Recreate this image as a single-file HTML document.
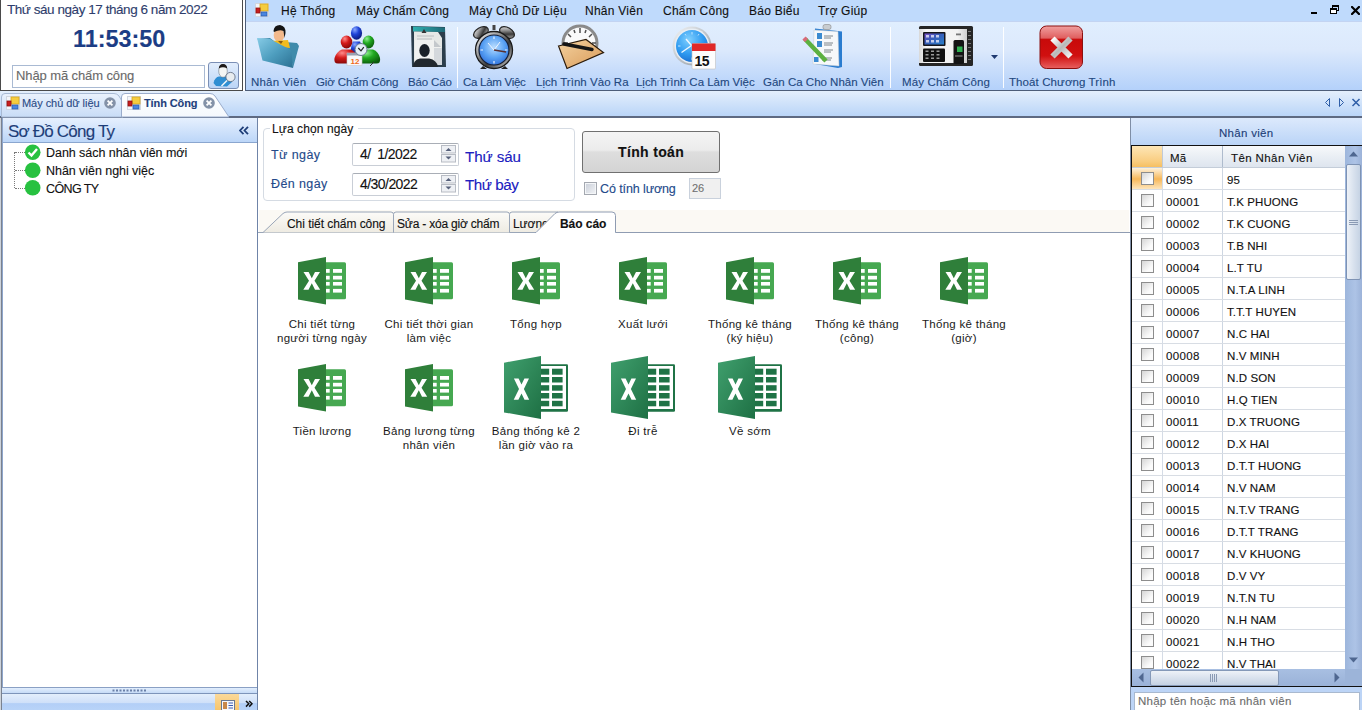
<!DOCTYPE html>
<html><head><meta charset="utf-8">
<style>
*{margin:0;padding:0;box-sizing:border-box}
html,body{width:1362px;height:710px;overflow:hidden;background:#fff;font-family:"Liberation Sans",sans-serif;position:relative}
.a{position:absolute}
.t{position:absolute;white-space:nowrap;line-height:1;-webkit-text-stroke:0.12px currentColor}
</style></head><body>

<!-- ===== Clock panel ===== -->
<div class="a" style="left:0;top:0;width:243px;height:91px;background:#fff;border-left:1px solid #4a4a4a;border-right:1px solid #4a4a4a;border-bottom:1px solid #4a4a4a"></div>
<div class="t" style="left:7px;top:3px;font-size:13.5px;color:#2e3d6c;letter-spacing:-0.45px">Thứ sáu ngày 17 tháng 6 năm 2022</div>
<div class="t" style="left:73px;top:28px;font-size:23.4px;font-weight:bold;color:#1c3d85">11:53:50</div>
<div class="a" style="left:12px;top:65px;width:193px;height:23px;border:1px solid #a9bad3;background:#fff"></div>
<div class="t" style="left:16px;top:69px;font-size:13px;color:#6a6a6a;letter-spacing:-0.1px">Nhập mã chấm công</div>
<div class="a" style="left:208px;top:62px;width:31px;height:27px;border:1px solid #7b8fb5;border-radius:3px;background:linear-gradient(#e2edfc,#bcd5f6)"></div>
<svg class="a" style="left:205px;top:58px" width="38" height="34" viewBox="0 0 38 34">
<path d="M8.5 25Q10 19 14 18.5L22 18.5Q26 19 27 24L22 28.5L11 28Z" fill="#2f8ed2"/>
<ellipse cx="18" cy="13" rx="4.3" ry="6.3" fill="#f4f6f4" stroke="#5a6470" stroke-width="0.5"/>
<path d="M13.8 10.5Q14 6 18 6Q22 6 22.2 10.5Q18 8 13.8 10.5Z" fill="#1e1a18"/>
<circle cx="25.5" cy="19" r="4.6" fill="#e8ecef" stroke="#5a6678" stroke-width="0.8"/>
<path d="M22 22.5L16.5 28" stroke="#f0f4f8" stroke-width="1.6"/>
</svg>

<!-- ===== Ribbon ===== -->
<div class="a" style="left:245px;top:0;width:1117px;height:91px;border-left:1px solid #4d5d78;border-bottom:1px solid #4d5d78;background:linear-gradient(#bfdafc 0,#bfdafc 21px,#c3d4f2 21px,#c3d4f2 22px,#e0eefe 22px,#dce9fc 55%,#b4d1fa 100%)"></div>


<!-- menu -->
<svg class="a" style="left:255px;top:3px" width="14" height="14" viewBox="0 0 14 14">
<rect x="0.5" y="0.5" width="13" height="13" fill="#f4f6fa" stroke="#d0d6e0"/>
<rect x="5" y="1" width="8" height="7" fill="#f5cc40" stroke="#d8a820" stroke-width="0.8"/>
<rect x="1" y="5" width="4" height="5" fill="#c81e1e" stroke="#901010" stroke-width="0.8"/>
<rect x="6" y="9" width="6" height="4" fill="#4a86e0" stroke="#2a5cb0" stroke-width="0.8"/>
</svg>
<div class="t" style="left:281px;top:5px;font-size:12px;color:#111;letter-spacing:0.25px">Hệ Thống</div>
<div class="t" style="left:356px;top:5px;font-size:12px;color:#111;letter-spacing:0.25px">Máy Chấm Công</div>
<div class="t" style="left:469px;top:5px;font-size:12px;color:#111;letter-spacing:0.25px">Máy Chủ Dữ Liệu</div>
<div class="t" style="left:585px;top:5px;font-size:12px;color:#111;letter-spacing:0.25px">Nhân Viên</div>
<div class="t" style="left:663px;top:5px;font-size:12px;color:#111;letter-spacing:0.25px">Chấm Công</div>
<div class="t" style="left:749px;top:5px;font-size:12px;color:#111;letter-spacing:0.25px">Báo Biểu</div>
<div class="t" style="left:818px;top:5px;font-size:12px;color:#111;letter-spacing:0.25px">Trợ Giúp</div>
<!-- window controls -->
<div class="a" style="left:1311px;top:12px;width:6px;height:2px;background:#000"></div>
<div class="a" style="left:1332px;top:5px;width:7px;height:6px;border:1px solid #000;border-top-width:2px"></div>
<div class="a" style="left:1330px;top:8px;width:7px;height:6px;border:1px solid #000;border-top-width:2px;background:#fff"></div>
<svg class="a" style="left:1351px;top:6px" width="9" height="9" viewBox="0 0 9 9"><path d="M1 1L8 8M8 1L1 8" stroke="#000" stroke-width="2.2" stroke-linecap="square"/></svg>

<!-- ribbon icons -->
<svg class="a" style="left:252px;top:22px" width="52" height="50" viewBox="0 0 52 50">
<defs><linearGradient id="fold" x1="0" y1="0" x2="1" y2="1"><stop offset="0" stop-color="#86cbe6"/><stop offset="0.5" stop-color="#4e9ebf"/><stop offset="1" stop-color="#2b7092"/></linearGradient></defs>
<path d="M5 17L18 16L22 19L45 21L47 24L41 46L38 29Z" fill="#3f8bab"/>
<ellipse cx="27" cy="13" rx="5.3" ry="6.8" fill="#f2b98c"/>
<path d="M21.5 9Q22 3 28 3Q34 4 33.5 11L32.5 16L31.5 9Q28 7 22 10Z" fill="#141414"/>
<path d="M18 19L36 18L38 26L20 24Z" fill="#f1bb1c"/>
<path d="M26 19L29 22L31 19Z" fill="#8a5a10"/>
<path d="M5 16L18 17L37 27L39.5 29L41 46L10.5 38.5Z" fill="url(#fold)"/>
</svg>
<svg class="a" style="left:330px;top:22px" width="54" height="50" viewBox="0 0 54 50">
<defs>
<radialGradient id="rp" cx="0.35" cy="0.25" r="0.8"><stop offset="0" stop-color="#ff8a8a"/><stop offset="0.45" stop-color="#d41a1a"/><stop offset="1" stop-color="#800606"/></radialGradient>
<radialGradient id="bp" cx="0.35" cy="0.25" r="0.8"><stop offset="0" stop-color="#8aa8ff"/><stop offset="0.45" stop-color="#1f44d8"/><stop offset="1" stop-color="#0a1878"/></radialGradient>
<radialGradient id="gp" cx="0.35" cy="0.25" r="0.8"><stop offset="0" stop-color="#90f090"/><stop offset="0.45" stop-color="#20a820"/><stop offset="1" stop-color="#0a5a0a"/></radialGradient>
</defs>
<path d="M20.5 31Q21 23 23 19.5L30 19.5Q32 23 32.5 31Z" fill="url(#bp)"/>
<ellipse cx="26.5" cy="11" rx="5.6" ry="6.8" fill="url(#bp)"/>
<path d="M8 41.5Q3.5 41.5 4.5 36Q6.5 29.5 12 27.5L21 27.5Q25.5 29.5 26.5 35L26.5 41.5Z" fill="url(#rp)"/>
<ellipse cx="16.5" cy="20" rx="5.8" ry="6.5" fill="url(#rp)"/>
<path d="M28.5 41.5L28.5 35Q29.5 29.5 34 27.5L43 27.5Q48.5 29.5 50 36Q51 41.5 46.5 41.5Z" fill="url(#gp)"/>
<ellipse cx="38.5" cy="20" rx="5.8" ry="6.5" fill="url(#gp)"/>
<rect x="17" y="31" width="15" height="12.5" fill="#f8f8fa" stroke="#c8c8d0" stroke-width="0.6"/>
<rect x="17" y="31" width="15" height="2.5" fill="#9aa0b0"/>
<text x="20.5" y="41.5" font-family="Liberation Sans" font-size="8" font-weight="bold" fill="#f06a1a">12</text>
<circle cx="31" cy="27.5" r="6" fill="#e4eef8" stroke="#6a7c90" stroke-width="1"/>
<path d="M28.3 26L31 28.8L33.8 25.2" stroke="#222" stroke-width="1.2" fill="none"/>
<path d="M40 44L44 40" stroke="#333" stroke-width="1"/>
</svg>
<svg class="a" style="left:404px;top:22px" width="50" height="50" viewBox="0 0 50 50">
<defs><linearGradient id="bt" x1="0" y1="0" x2="1" y2="0"><stop offset="0" stop-color="#2fb0b0"/><stop offset="1" stop-color="#1f6a78"/></linearGradient></defs>
<path d="M7 4L41 5L42 45L8 45Z" fill="#2c3e4c"/>
<path d="M9 4.5L41 5.5L41 10L9 9.5Z" fill="url(#bt)"/>
<path d="M10 9.5L34 10L38 16L38 42L10 42Z" fill="#e6e8e6"/>
<path d="M13 14H30M13 17H28" stroke="#b0b4b8" stroke-width="0.8"/>
<path d="M11 18L30 18L37 25L37 42L11 42Z" fill="#f0f1f0"/>
<path d="M30 18L30 25L37 25Z" fill="#c4c8cc"/>
<path d="M30 26L38 26L38 43L30 43Z" fill="#d4d8dc"/>
<path d="M17.5 11L20 7L22.5 11Z" fill="#333"/>
<ellipse cx="20.5" cy="28.5" rx="5.2" ry="6.5" fill="#1a2028"/>
<path d="M9 45Q9 38 16 36.5L25 36.5Q33 38 34 45Z" fill="#22282e"/>
</svg>
<svg class="a" style="left:468px;top:22px" width="52" height="50" viewBox="0 0 52 50">
<defs>
<radialGradient id="cf" cx="0.5" cy="0.4" r="0.65"><stop offset="0" stop-color="#b8dcff"/><stop offset="0.55" stop-color="#5aa2f4"/><stop offset="1" stop-color="#2a6ad8"/></radialGradient>
<linearGradient id="sil" x1="0" y1="0" x2="1" y2="1"><stop offset="0" stop-color="#ffffff"/><stop offset="0.35" stop-color="#9a9a9a"/><stop offset="0.6" stop-color="#3a3a3a"/><stop offset="1" stop-color="#e0e0e0"/></linearGradient>
</defs>
<ellipse cx="13" cy="10.5" rx="8" ry="5" transform="rotate(-30 13 10.5)" fill="url(#sil)" stroke="#222" stroke-width="1.2"/>
<ellipse cx="39" cy="10.5" rx="8" ry="5" transform="rotate(30 39 10.5)" fill="url(#sil)" stroke="#222" stroke-width="1.2"/>
<rect x="24.5" y="3" width="3" height="5" fill="#444"/>
<path d="M15 44L12 47L19 47ZM37 44L40 47L33 47Z" fill="#222"/>
<circle cx="26" cy="28" r="18.5" fill="url(#sil)" stroke="#1a1a1a" stroke-width="1.3"/>
<circle cx="26" cy="28" r="15" fill="url(#cf)" stroke="#15203a" stroke-width="1.2"/>
<path d="M26 28L20 21M26 28L32 20" stroke="#f0f6ff" stroke-width="1"/>
<path d="M26 28L38 30" stroke="#5a3030" stroke-width="1.3"/>
<g stroke="#e8f2ff" stroke-width="1.2"><path d="M26 14.5V17M26 39V41.5M12.5 28H15M37 28H39.5"/></g>
</svg>
<svg class="a" style="left:554px;top:22px" width="54" height="50" viewBox="0 0 54 50">
<defs><linearGradient id="pad" x1="0" y1="0" x2="1" y2="1"><stop offset="0" stop-color="#f4d2a0"/><stop offset="1" stop-color="#d89a58"/></linearGradient></defs>
<circle cx="26" cy="21" r="17" fill="#fafafa" stroke="#8a8a8a" stroke-width="3"/>
<path d="M26 6V11M14 12L17 15M38 12L35 15M10 21H14M38 21H42M20 8L21 11M32 8L31 11" stroke="#505050" stroke-width="1.5"/>
<path d="M4.5 24L32 17.5L49.5 30.5L13 46.5Z" fill="url(#pad)" stroke="#2a1a0a" stroke-width="1.2"/>
<path d="M10 22L38 27.5" stroke="#151515" stroke-width="3.5" stroke-linecap="round"/>
</svg>
<svg class="a" style="left:668px;top:22px" width="54" height="50" viewBox="0 0 54 50">
<defs><radialGradient id="cf2" cx="0.4" cy="0.3" r="0.75"><stop offset="0" stop-color="#7fd0ff"/><stop offset="0.6" stop-color="#2e9af0"/><stop offset="1" stop-color="#1a6cd0"/></radialGradient>
<linearGradient id="rg2" x1="0" y1="0" x2="1" y2="1"><stop offset="0" stop-color="#f4f6f8"/><stop offset="1" stop-color="#8a949e"/></linearGradient></defs>
<circle cx="24" cy="24" r="19.5" fill="url(#rg2)"/>
<circle cx="24" cy="24" r="17.5" fill="#e8eef4"/>
<circle cx="24" cy="24" r="16" fill="url(#cf2)"/>
<g stroke="#bfe4ff" stroke-width="1"><path d="M24 10V12.5M24 35.5V38M10 24H12.5M35.5 24H38M31 12L30 13.5M17 12L18 13.5"/></g>
<path d="M23.5 23.5L18 17M23.5 23.5L13.5 30.5" stroke="#f0f8ff" stroke-width="1.4"/>
<rect x="24" y="21.5" width="23.5" height="25.5" rx="1" fill="#fdfdfd" stroke="#c0c0c0" stroke-width="0.6"/>
<rect x="24" y="21.5" width="23.5" height="7.5" fill="#e02828"/>
<text x="26.5" y="43.5" font-family="Liberation Sans" font-size="14" font-weight="bold" fill="#111" letter-spacing="-0.5">15</text>
</svg>
<svg class="a" style="left:798px;top:22px" width="50" height="50" viewBox="0 0 50 50">
<path d="M17 6.5L44 9.5L44 45L40 46L17 42Z" fill="#2a7ccf"/>
<path d="M16 8L40 9.5L41 44L15 42Z" fill="#f6f8fa" stroke="#c0c8d0" stroke-width="0.5"/>
<rect x="25" y="2.5" width="8" height="5" rx="2" fill="#c8ccd0" stroke="#888" stroke-width="0.6"/>
<rect x="19" y="11" width="5" height="6" fill="#3a8ad0"/>
<rect x="19" y="19" width="5" height="6" fill="#3a8ad0"/>
<rect x="16" y="35" width="4.5" height="5" fill="#3a8ad0"/>
<path d="M26 14H35M26 16H33M26 21H35M26 23H34M26 28H35M26 30H33M24 36H34M24 38H33" stroke="#707880" stroke-width="0.9"/>
<path d="M7 17L28 39" stroke="#5cb040" stroke-width="4.5"/>
<path d="M6 16L8.5 18.5" stroke="#d86a7a" stroke-width="4.5"/>
</svg>
<svg class="a" style="left:914px;top:22px" width="64" height="50" viewBox="0 0 64 50">
<defs><linearGradient id="mb" x1="0" y1="0" x2="1" y2="0"><stop offset="0" stop-color="#d8d8d8"/><stop offset="0.15" stop-color="#f6f6f6"/><stop offset="0.8" stop-color="#f2f2f2"/><stop offset="1" stop-color="#cfcfcf"/></linearGradient>
<linearGradient id="ms" x1="0" y1="0" x2="1" y2="1"><stop offset="0" stop-color="#7a50c8"/><stop offset="0.4" stop-color="#3a5ab8"/><stop offset="1" stop-color="#2a80c8"/></linearGradient></defs>
<rect x="5" y="4" width="54" height="40" rx="1.5" fill="#262626"/>
<rect x="5" y="7" width="48" height="34" fill="url(#mb)"/>
<rect x="9" y="10" width="22.5" height="14" rx="1" fill="#15151c"/>
<rect x="10.5" y="11.5" width="19.5" height="11" fill="url(#ms)"/>
<g fill="#e8e8f8" opacity="0.8"><rect x="12" y="13" width="3" height="2.5"/><rect x="17" y="13" width="3" height="2.5"/><rect x="22" y="13" width="3" height="2.5"/><rect x="12" y="18" width="3" height="2.5"/><rect x="17" y="18" width="3" height="2.5"/><rect x="22" y="18" width="3" height="2.5"/></g>
<rect x="9" y="26.5" width="22" height="13.5" rx="1" fill="#111"/>
<g fill="#9a9a9a"><rect x="11.5" y="28.5" width="3" height="1.5"/><rect x="17" y="28.5" width="3" height="1.5"/><rect x="22.5" y="28.5" width="3" height="1.5"/><rect x="11.5" y="32" width="3" height="1.5"/><rect x="17" y="32" width="3" height="1.5"/><rect x="22.5" y="32" width="3" height="1.5"/><rect x="11.5" y="35.5" width="3" height="1.5"/><rect x="17" y="35.5" width="3" height="1.5"/><rect x="22.5" y="35.5" width="3" height="1.5"/></g>
<rect x="39.5" y="18" width="10.5" height="24" rx="1.5" fill="#141414"/>
<rect x="43" y="24.5" width="5.5" height="5.5" fill="#2fb050"/>
<rect x="41" y="33" width="7.5" height="2" fill="#555"/>
<rect x="42" y="11.5" width="5" height="1.8" fill="#777"/>
<g fill="#777"><rect x="54" y="9" width="3" height="1"/><rect x="54" y="13" width="3" height="1"/><rect x="54" y="17" width="3" height="1"/><rect x="54" y="21" width="3" height="1"/><rect x="54" y="25" width="3" height="1"/><rect x="54" y="29" width="3" height="1"/><rect x="54" y="33" width="3" height="1"/><rect x="54" y="37" width="3" height="1"/></g>
</svg>
<svg class="a" style="left:1034px;top:22px" width="54" height="50" viewBox="0 0 54 50">
<defs>
<linearGradient id="rx" x1="0" y1="0" x2="0" y2="1"><stop offset="0" stop-color="#f0a0a0"/><stop offset="0.28" stop-color="#e06060"/><stop offset="0.32" stop-color="#c80a0a"/><stop offset="0.7" stop-color="#d01010"/><stop offset="1" stop-color="#e86060"/></linearGradient>
<linearGradient id="xs" x1="0" y1="0" x2="1" y2="1"><stop offset="0" stop-color="#ffffff"/><stop offset="0.5" stop-color="#b8b8b8"/><stop offset="1" stop-color="#f4f4f4"/></linearGradient>
</defs>
<rect x="6" y="4" width="42.5" height="42.5" rx="6.5" fill="url(#rx)" stroke="#8c1010" stroke-width="1"/>
<path d="M18.5 16.5L36.5 34.5M36.5 16.5L18.5 34.5" stroke="url(#xs)" stroke-width="6" stroke-linecap="butt"/>
</svg>

<!-- ribbon labels -->
<div class="t" style="left:251px;top:77px;font-size:11.5px;color:#23487f;letter-spacing:0.2px">Nhân Viên</div>
<div class="t" style="left:316px;top:77px;font-size:11.5px;color:#23487f;letter-spacing:-0.1px">Giờ Chấm Công</div>
<div class="t" style="left:408px;top:77px;font-size:11.5px;color:#23487f;letter-spacing:-0.15px">Báo Cáo</div>
<div class="t" style="left:463px;top:77px;font-size:11.5px;color:#23487f;letter-spacing:-0.28px">Ca Làm Việc</div>
<div class="t" style="left:536px;top:77px;font-size:11.5px;color:#23487f;letter-spacing:0.03px">Lịch Trình Vào Ra</div>
<div class="t" style="left:636px;top:77px;font-size:11.5px;color:#23487f;letter-spacing:-0.03px">Lịch Trình Ca Làm Việc</div>
<div class="t" style="left:763px;top:77px;font-size:11.5px;color:#23487f;letter-spacing:0px">Gán Ca Cho Nhân Viên</div>
<div class="t" style="left:902px;top:77px;font-size:11.5px;color:#23487f;letter-spacing:0.14px">Máy Chấm Công</div>
<div class="t" style="left:1009px;top:77px;font-size:11.5px;color:#23487f;letter-spacing:0.1px">Thoát Chương Trình</div>
<!-- separators -->
<div class="a" style="left:457px;top:27px;width:1px;height:61px;background:rgba(255,255,255,0.92)"></div>
<div class="a" style="left:890px;top:27px;width:1px;height:61px;background:rgba(255,255,255,0.92)"></div>
<div class="a" style="left:1003px;top:27px;width:1px;height:61px;background:rgba(255,255,255,0.92)"></div>
<svg class="a" style="left:991px;top:55px" width="7" height="4" viewBox="0 0 7 4"><path d="M0 0H7L3.5 4Z" fill="#1f3a70"/></svg>

<!-- ===== Tab strip ===== -->
<div class="a" style="left:0;top:91px;width:1362px;height:27px;background:linear-gradient(#e4effc,#bad5f8);border-bottom:2px solid #5e6a82"></div>


<!-- doc tabs -->
<svg class="a" style="left:0;top:91px" width="240" height="27" viewBox="0 0 240 27">
<defs>
<linearGradient id="t1" x1="0" y1="0" x2="0" y2="1"><stop offset="0" stop-color="#eaf2fd"/><stop offset="1" stop-color="#c8dcf6"/></linearGradient>
<linearGradient id="t2" x1="0" y1="0" x2="0" y2="1"><stop offset="0" stop-color="#ffffff"/><stop offset="1" stop-color="#f4f8fd"/></linearGradient>
</defs>
<path d="M1.5 26V6Q1.5 2.5 5 2.5H114Q117 2.5 119 5L123 12V26Z" fill="url(#t1)" stroke="#a8bad4" stroke-width="1"/>
<path d="M121.5 26V6Q121.5 2.5 125 2.5H210Q213 2.5 215 5L229 26Z" fill="url(#t2)" stroke="#9aaccc" stroke-width="1"/>
</svg>
<svg class="a" style="left:6px;top:96px" width="14" height="14" viewBox="0 0 14 14">
<rect x="0.5" y="0.5" width="13" height="13" fill="#f4f6fa" stroke="#d0d6e0"/>
<rect x="5" y="1" width="8" height="7" fill="#f5cc40" stroke="#d8a820" stroke-width="0.8"/>
<rect x="1" y="5" width="4" height="5" fill="#c81e1e" stroke="#901010" stroke-width="0.8"/>
<rect x="6" y="9" width="6" height="4" fill="#4a86e0" stroke="#2a5cb0" stroke-width="0.8"/>
</svg>
<div class="t" style="left:22px;top:98px;font-size:11px;color:#2b4b86;letter-spacing:-0.05px">Máy chủ dữ liệu</div>
<svg class="a" style="left:104px;top:97px" width="12" height="12" viewBox="0 0 12 12"><circle cx="6" cy="6" r="5.8" fill="#8492a8"/><path d="M3.6 3.6L8.4 8.4M8.4 3.6L3.6 8.4" stroke="#fff" stroke-width="1.8"/></svg>
<svg class="a" style="left:127px;top:96px" width="14" height="14" viewBox="0 0 14 14">
<rect x="0.5" y="0.5" width="13" height="13" fill="#f4f6fa" stroke="#d0d6e0"/>
<rect x="5" y="1" width="8" height="7" fill="#f5cc40" stroke="#d8a820" stroke-width="0.8"/>
<rect x="1" y="5" width="4" height="5" fill="#c81e1e" stroke="#901010" stroke-width="0.8"/>
<rect x="6" y="9" width="6" height="4" fill="#4a86e0" stroke="#2a5cb0" stroke-width="0.8"/>
</svg>
<div class="t" style="left:144px;top:98px;font-size:11px;font-weight:bold;color:#1f3f7c;letter-spacing:-0.1px">Tính Công</div>
<svg class="a" style="left:203px;top:97px" width="12" height="12" viewBox="0 0 12 12"><circle cx="6" cy="6" r="5.8" fill="#8492a8"/><path d="M3.6 3.6L8.4 8.4M8.4 3.6L3.6 8.4" stroke="#fff" stroke-width="1.8"/></svg>
<svg class="a" style="left:1322px;top:96px" width="40" height="13" viewBox="0 0 40 13">
<path d="M7.5 2.5L3.5 6.5L7.5 10.5Z" fill="none" stroke="#2f5fa8" stroke-width="1"/>
<path d="M17.5 2.5L21.5 6.5L17.5 10.5Z" fill="none" stroke="#2f5fa8" stroke-width="1"/>
<path d="M30.5 3L37.5 10M37.5 3L30.5 10" stroke="#2f5fa8" stroke-width="1.5"/>
</svg>

<!-- ===== Left panel ===== -->
<div class="a" style="left:0;top:118px;width:258px;height:592px;background:#fff;border-left:1px solid #cdd3db;border-right:1px solid #6f84a8"></div>
<div class="a" style="left:1px;top:118px;width:1px;height:592px;background:#7a8290"></div>
<div class="a" style="left:2px;top:118px;width:1px;height:592px;background:#8ea6cc"></div>
<div class="a" style="left:3px;top:118px;width:254px;height:25px;background:linear-gradient(#e6f0fe,#bcd6f8);border-bottom:1px solid #8aa6cf"></div>


<div class="t" style="left:8px;top:123px;font-size:17px;color:#1e3e78;letter-spacing:-0.8px">Sơ Đồ Công Ty</div>
<svg class="a" style="left:239px;top:126px" width="10" height="9" viewBox="0 0 10 9"><path d="M4.5 0.8L1 4.5L4.5 8.2M9 0.8L5.5 4.5L9 8.2" fill="none" stroke="#1e3e78" stroke-width="1.8"/></svg>
<!-- tree -->
<div class="a" style="left:14px;top:152px;width:1px;height:36px;border-left:1px dotted #7a7a7a"></div>
<div class="a" style="left:15px;top:152px;width:10px;height:1px;border-top:1px dotted #7a7a7a"></div>
<div class="a" style="left:15px;top:170px;width:10px;height:1px;border-top:1px dotted #7a7a7a"></div>
<div class="a" style="left:15px;top:188px;width:10px;height:1px;border-top:1px dotted #7a7a7a"></div>
<svg class="a" style="left:24px;top:144px" width="18" height="54" viewBox="0 0 18 54">
<circle cx="8.7" cy="8.2" r="7.8" fill="#27c140"/>
<path d="M4.5 8.5L7.5 11.5L13 5" stroke="#fff" stroke-width="2.4" fill="none"/>
<circle cx="8.7" cy="26.3" r="7.8" fill="#27c140"/>
<circle cx="8.7" cy="43.8" r="7.8" fill="#27c140"/>
</svg>
<div class="t" style="left:46px;top:147px;font-size:12.5px;color:#111;letter-spacing:-0.05px">Danh sách nhân viên mới</div>
<div class="t" style="left:46px;top:165px;font-size:12.5px;color:#111;letter-spacing:-0.05px">Nhân viên nghi việc</div>
<div class="t" style="left:46px;top:183px;font-size:12.5px;color:#111;letter-spacing:-0.6px">CÔNG TY</div>
<!-- bottom -->
<div class="a" style="left:2px;top:687px;width:255px;height:7px;background:linear-gradient(#e2eefd,#c6dbf7);border-top:1px solid #8aa0c4;border-bottom:1px solid #7d94ba"></div>
<svg class="a" style="left:112px;top:689px" width="36" height="3" viewBox="0 0 36 3"><path d="M0.5 1.5H35" stroke="#6a80a8" stroke-width="2" stroke-dasharray="2 1.5"/></svg>
<div class="a" style="left:2px;top:694px;width:255px;height:16px;background:linear-gradient(#e3eefc 0,#cfe0f9 55%,#b3cff7 60%,#b8d3f8 100%)"></div>
<div class="a" style="left:215px;top:694px;width:24px;height:16px;background:linear-gradient(#fbd99a,#f8c56c)"></div>
<svg class="a" style="left:221px;top:700px" width="14" height="10" viewBox="0 0 14 10"><rect x="0.5" y="0.5" width="13" height="10" fill="#f6f8fb" stroke="#6a7890"/><rect x="2" y="2" width="4" height="7" fill="#c8884a"/><path d="M7.5 3H12M7.5 5.5H12M7.5 8H12" stroke="#3a5ab0" stroke-width="1"/></svg>
<svg class="a" style="left:244.5px;top:699.5px" width="8" height="8" viewBox="0 0 8 8"><path d="M1 1L3.8 3.8L1 6.6M4.2 1L7 3.8L4.2 6.6" fill="none" stroke="#111" stroke-width="1.5"/></svg>

<!-- ===== Center ===== -->
<div class="a" style="left:258px;top:118px;width:872px;height:592px;background:#fff"></div>


<!-- group box -->
<div class="a" style="left:263px;top:128px;width:312px;height:73px;border:1px solid #d5dbe3;border-radius:4px"></div>
<div class="a" style="left:270px;top:121px;width:88px;height:12px;background:#fff"></div>
<div class="t" style="left:272px;top:123px;font-size:12px;color:#111;letter-spacing:0.1px">Lựa chọn ngày</div>
<div class="t" style="left:271px;top:149px;font-size:12.5px;color:#244a8a;letter-spacing:0.4px">Từ ngày</div>
<div class="t" style="left:271px;top:178px;font-size:12.5px;color:#244a8a;letter-spacing:0.4px">Đến ngày</div>
<div class="a" style="left:352px;top:143px;width:107px;height:23px;border:1px solid #c9ced6;border-top-color:#a9aeb6;border-radius:2px;background:#fff"></div>
<div class="a" style="left:352px;top:173px;width:107px;height:23px;border:1px solid #c9ced6;border-top-color:#a9aeb6;border-radius:2px;background:#fff"></div>
<div class="t" style="left:360px;top:147px;font-size:14px;color:#111;letter-spacing:-0.55px;white-space:pre">4/  1/2022</div>
<div class="t" style="left:360px;top:177px;font-size:14px;color:#111;letter-spacing:-0.55px">4/30/2022</div>
<svg class="a" style="left:441px;top:145px" width="16" height="49" viewBox="0 0 16 49">
<g fill="#eef0f4" stroke="#b8bcc4" stroke-width="1"><rect x="0.5" y="0.5" width="14" height="7.5"/><rect x="0.5" y="9.5" width="14" height="7.5"/><rect x="0.5" y="30.5" width="14" height="7.5"/><rect x="0.5" y="39.5" width="14" height="7.5"/></g>
<g fill="#56607a"><path d="M4.5 6L7.5 3L10.5 6Z"/><path d="M4.5 11.5L7.5 14.5L10.5 11.5Z"/><path d="M4.5 36L7.5 33L10.5 36Z"/><path d="M4.5 41.5L7.5 44.5L10.5 41.5Z"/></g>
</svg>
<div class="t" style="left:465px;top:149px;font-size:15.2px;color:#2020c0;letter-spacing:-0.1px">Thứ sáu</div>
<div class="t" style="left:465px;top:177px;font-size:15.2px;color:#2020c0;letter-spacing:-0.45px">Thứ bảy</div>
<!-- button -->
<div class="a" style="left:582px;top:131px;width:138px;height:42px;border:1px solid #707070;border-radius:3px;background:linear-gradient(#f4f4f4 0,#ececec 45%,#dedede 50%,#d4d4d4 100%)"></div>
<div class="t" style="left:618px;top:145px;font-size:14px;font-weight:bold;color:#111;letter-spacing:0.35px">Tính toán</div>
<div class="a" style="left:584px;top:182px;width:13px;height:13px;border:1px solid #a4a8b0;box-shadow:inset 0 0 0 1px #f4f6f8;background:linear-gradient(135deg,#c9ced8,#f2f4f7)"></div>
<div class="t" style="left:600px;top:183px;font-size:12.5px;color:#244a8a;letter-spacing:-0.1px">Có tính lương</div>
<div class="a" style="left:689px;top:178px;width:32px;height:21px;border:1px solid #c9d1dc;background:#f0f0f0"></div>
<div class="t" style="left:692px;top:183px;font-size:11px;color:#707070">26</div>


<!-- sub tabs -->
<div class="a" style="left:259px;top:210px;width:870px;height:22px;background:#fbf9f4"></div>
<svg class="a" style="left:258px;top:205px" width="872" height="30" viewBox="0 0 872 30">
<defs><linearGradient id="it" x1="0" y1="0" x2="0" y2="1"><stop offset="0" stop-color="#fcfbf8"/><stop offset="1" stop-color="#eeebe2"/></linearGradient></defs>
<path d="M0 27.5H872" stroke="#9aa6b8" stroke-width="1"/>
<path d="M5 27.5L25 8.5Q27 7 29 7H133Q135.5 7 135.5 9.5V27.5" fill="url(#it)" stroke="#9aa6b8" stroke-width="1"/>
<path d="M135.5 27.5V9.5Q135.5 7 138 7H249Q251.5 7 251.5 9.5V27.5" fill="url(#it)" stroke="#9aa6b8" stroke-width="1"/>
<path d="M251.5 27.5V9.5Q251.5 7 254 7H300V27.5Z" fill="url(#it)" stroke="#9aa6b8" stroke-width="1"/>
</svg>
<div class="t" style="left:287px;top:218px;font-size:12px;color:#111;letter-spacing:-0.05px">Chi tiết chấm công</div>
<div class="t" style="left:397px;top:218px;font-size:12px;color:#111;letter-spacing:-0.2px">Sửa - xóa giờ chấm</div>
<div class="a" style="left:509px;top:212px;width:38px;height:20px;overflow:hidden"><div class="t" style="left:4px;top:6px;font-size:12px;color:#111;letter-spacing:-0.05px">Lương</div></div>
<svg class="a" style="left:258px;top:205px" width="872" height="30" viewBox="0 0 872 30">
<path d="M277 28L297 8.5Q299 7 301 7H354Q357.5 7 357.5 10.5V27.5H872V30H277Z" fill="#fff"/>
<path d="M277 27.5H278L297 8.5Q299 7 301 7H354Q357.5 7 357.5 10.5V27.5H872" fill="none" stroke="#8f9cb2" stroke-width="1"/>
<path d="M266 28H290L297 8.5" fill="none"/>
</svg>
<div class="t" style="left:560px;top:218px;font-size:12px;font-weight:bold;color:#111;letter-spacing:-0.05px">Báo cáo</div>

<!-- excel grid -->
<svg class="a" style="left:0;top:0" width="1362" height="710" viewBox="0 0 1362 710">
<defs>
<linearGradient id="xb" x1="0" y1="0" x2="1" y2="1"><stop offset="0" stop-color="#40a06e"/><stop offset="1" stop-color="#1e7044"/></linearGradient>
<symbol id="xs1" viewBox="0 0 48 48" width="48" height="48">
<rect x="26" y="5.3" width="22" height="36.9" rx="1.5" fill="#46a851"/>
<g fill="#fff"><rect x="28" y="12" width="3.7" height="3.8"/><rect x="35" y="12" width="9" height="3.8"/><rect x="28" y="18.8" width="3.7" height="3.7"/><rect x="35" y="18.8" width="9" height="3.7"/><rect x="28" y="25" width="3.7" height="3.6"/><rect x="35" y="25" width="9" height="3.6"/><rect x="28" y="31.9" width="3.7" height="3.7"/><rect x="35" y="31.9" width="9" height="3.7"/></g>
<path d="M0 5.3L28 0V47.5L0 42.4Z" fill="#2f7f3a"/>
<path d="M5.5 15H10.6L13.8 21.2L17 15H22L16.5 23.8L22.2 32.7H17L13.8 26.3L10.5 32.7H5.3L11 23.8Z" fill="#fff"/>
</symbol>
<symbol id="xl1" viewBox="0 0 64 64" width="64" height="64">
<rect x="30" y="8.2" width="34" height="47.5" rx="1.2" fill="#1f7346"/>
<rect x="34" y="10" width="28" height="43" fill="#fff"/>
<g fill="#1f7346"><rect x="34" y="12.7" width="11.2" height="6"/><rect x="48" y="12.7" width="10.6" height="6"/><rect x="34" y="21" width="11.2" height="5.5"/><rect x="48" y="21" width="10.6" height="5.5"/><rect x="34" y="29.2" width="11.2" height="5.5"/><rect x="48" y="29.2" width="10.6" height="5.5"/><rect x="34" y="37" width="11.2" height="5.5"/><rect x="48" y="37" width="10.6" height="5.5"/><rect x="34" y="44.8" width="11.2" height="5.5"/><rect x="48" y="44.8" width="10.6" height="5.5"/></g>
<path d="M0 6.7L37 0V63L0 56.4Z" fill="url(#xb)"/>
<path d="M9.9 22.5H14.6L17.5 28.4L20.4 22.5H25L19.9 33L25.2 43.7H20.5L17.5 37.6L14.4 43.7H9.7L15 33Z" fill="#fff"/>
</symbol>
</defs>
<use href="#xs1" x="298" y="257" width="48" height="48"/>
<use href="#xs1" x="405" y="257" width="48" height="48"/>
<use href="#xs1" x="512" y="257" width="48" height="48"/>
<use href="#xs1" x="619" y="257" width="48" height="48"/>
<use href="#xs1" x="726" y="257" width="48" height="48"/>
<use href="#xs1" x="833" y="257" width="48" height="48"/>
<use href="#xs1" x="940" y="257" width="48" height="48"/>
<use href="#xs1" x="298" y="364" width="48" height="48"/>
<use href="#xs1" x="405" y="364" width="48" height="48"/>
<use href="#xl1" x="504" y="356" width="64" height="64"/>
<use href="#xl1" x="611" y="356" width="64" height="64"/>
<use href="#xl1" x="718" y="356" width="64" height="64"/>
</svg>
<div class="a" style="left:262px;top:317px;width:120px;text-align:center;font-size:11.5px;line-height:14px;color:#1a1a1a;letter-spacing:0.3px">Chi tiết từng<br>người từng ngày</div>
<div class="a" style="left:369px;top:317px;width:120px;text-align:center;font-size:11.5px;line-height:14px;color:#1a1a1a;letter-spacing:0.3px">Chi tiết thời gian<br>làm việc</div>
<div class="a" style="left:476px;top:317px;width:120px;text-align:center;font-size:11.5px;line-height:14px;color:#1a1a1a;letter-spacing:0.3px">Tổng hợp</div>
<div class="a" style="left:583px;top:317px;width:120px;text-align:center;font-size:11.5px;line-height:14px;color:#1a1a1a;letter-spacing:0.3px">Xuất lưới</div>
<div class="a" style="left:690px;top:317px;width:120px;text-align:center;font-size:11.5px;line-height:14px;color:#1a1a1a;letter-spacing:0.3px">Thống kê tháng<br>(ký hiệu)</div>
<div class="a" style="left:797px;top:317px;width:120px;text-align:center;font-size:11.5px;line-height:14px;color:#1a1a1a;letter-spacing:0.3px">Thống kê tháng<br>(công)</div>
<div class="a" style="left:904px;top:317px;width:120px;text-align:center;font-size:11.5px;line-height:14px;color:#1a1a1a;letter-spacing:0.3px">Thống kê tháng<br>(giờ)</div>
<div class="a" style="left:262px;top:424px;width:120px;text-align:center;font-size:11.5px;line-height:14px;color:#1a1a1a;letter-spacing:0.3px">Tiền lương</div>
<div class="a" style="left:369px;top:424px;width:120px;text-align:center;font-size:11.5px;line-height:14px;color:#1a1a1a;letter-spacing:0.3px">Bảng lương từng<br>nhân viên</div>
<div class="a" style="left:476px;top:424px;width:120px;text-align:center;font-size:11.5px;line-height:14px;color:#1a1a1a;letter-spacing:0.3px">Bảng thống kê 2<br>lần giờ vào ra</div>
<div class="a" style="left:583px;top:424px;width:120px;text-align:center;font-size:11.5px;line-height:14px;color:#1a1a1a;letter-spacing:0.3px">Đi trễ</div>
<div class="a" style="left:690px;top:424px;width:120px;text-align:center;font-size:11.5px;line-height:14px;color:#1a1a1a;letter-spacing:0.3px">Về sớm</div>

<!-- ===== Right panel ===== -->
<div class="a" style="left:1130px;top:118px;width:232px;height:592px;background:#c9ddf6;border-left:1px solid #8a8a8a"></div>


<!-- right panel content -->
<div class="a" style="left:1130px;top:118px;width:1px;height:592px;background:#7f8ea6"></div>
<div class="a" style="left:1131px;top:118px;width:231px;height:27px;background:linear-gradient(#dce9fc,#bad4f7)"></div>
<div class="t" style="left:1219px;top:128px;font-size:11.5px;color:#1e3e78;letter-spacing:0.3px">Nhân viên</div>
<div class="a" style="left:1131px;top:145px;width:231px;height:1px;background:#111"></div>
<div class="a" style="left:1131px;top:145px;width:1px;height:542px;background:#111"></div>
<div class="a" style="left:1131px;top:686px;width:231px;height:1px;background:#111"></div>
<!-- grid body -->
<div class="a" style="left:1132px;top:146px;width:213px;height:523px;background:#fff;overflow:hidden">
<div class="a" style="left:0;top:0;width:30px;height:22px;background:linear-gradient(#fde6b6,#f9cd80 70%,#f6bd5c)"></div>
<div class="a" style="left:31px;top:0;width:182px;height:22px;background:linear-gradient(#f7f9fb,#e9eef4 50%,#dde4ee)"></div>
<div class="a" style="left:30px;top:0;width:1px;height:523px;background:#d5dce6"></div>
<div class="a" style="left:90px;top:0;width:1px;height:523px;background:#cdd6e2"></div>
<div class="a" style="left:30px;top:0;width:1px;height:22px;background:#c0cad8"></div>
<div class="a" style="left:90px;top:0;width:1px;height:22px;background:#aebbcd"></div>
<div class="a" style="left:0;top:21px;width:213px;height:1px;background:#c4cdd9"></div>
<div class="t" style="left:38px;top:7px;font-size:11.5px;color:#111;letter-spacing:0.2px">Mã</div>
<div class="t" style="left:99px;top:7px;font-size:11.5px;color:#111;letter-spacing:0.4px">Tên Nhân Viên</div>
<div class="a" style="left:0;top:22px;width:30px;height:22px;background:linear-gradient(#fef2dc,#f7b85a 50%,#fde9c6)"></div>
<div class="a" style="left:0;top:43px;width:213px;height:1px;background:#d8dde4"></div>
<div class="a" style="left:9px;top:26px;width:13px;height:13px;border:1px solid #8d8d8d;background:linear-gradient(135deg,#d6d6d6,#fbfbfb 70%)"></div>
<div class="t" style="left:34px;top:29px;font-size:11.5px;color:#111;letter-spacing:0.35px">0095</div>
<div class="t" style="left:95px;top:29px;font-size:11.5px;color:#111;letter-spacing:0.1px">95</div>
<div class="a" style="left:0;top:65px;width:213px;height:1px;background:#d8dde4"></div>
<div class="a" style="left:9px;top:48px;width:13px;height:13px;border:1px solid #8d8d8d;background:linear-gradient(135deg,#d6d6d6,#fbfbfb 70%)"></div>
<div class="t" style="left:34px;top:51px;font-size:11.5px;color:#111;letter-spacing:0.35px">00001</div>
<div class="t" style="left:95px;top:51px;font-size:11.5px;color:#111;letter-spacing:0.1px">T.K PHUONG</div>
<div class="a" style="left:0;top:87px;width:213px;height:1px;background:#d8dde4"></div>
<div class="a" style="left:9px;top:70px;width:13px;height:13px;border:1px solid #8d8d8d;background:linear-gradient(135deg,#d6d6d6,#fbfbfb 70%)"></div>
<div class="t" style="left:34px;top:73px;font-size:11.5px;color:#111;letter-spacing:0.35px">00002</div>
<div class="t" style="left:95px;top:73px;font-size:11.5px;color:#111;letter-spacing:0.1px">T.K CUONG</div>
<div class="a" style="left:0;top:109px;width:213px;height:1px;background:#d8dde4"></div>
<div class="a" style="left:9px;top:92px;width:13px;height:13px;border:1px solid #8d8d8d;background:linear-gradient(135deg,#d6d6d6,#fbfbfb 70%)"></div>
<div class="t" style="left:34px;top:95px;font-size:11.5px;color:#111;letter-spacing:0.35px">00003</div>
<div class="t" style="left:95px;top:95px;font-size:11.5px;color:#111;letter-spacing:0.1px">T.B NHI</div>
<div class="a" style="left:0;top:131px;width:213px;height:1px;background:#d8dde4"></div>
<div class="a" style="left:9px;top:114px;width:13px;height:13px;border:1px solid #8d8d8d;background:linear-gradient(135deg,#d6d6d6,#fbfbfb 70%)"></div>
<div class="t" style="left:34px;top:117px;font-size:11.5px;color:#111;letter-spacing:0.35px">00004</div>
<div class="t" style="left:95px;top:117px;font-size:11.5px;color:#111;letter-spacing:0.1px">L.T TU</div>
<div class="a" style="left:0;top:153px;width:213px;height:1px;background:#d8dde4"></div>
<div class="a" style="left:9px;top:136px;width:13px;height:13px;border:1px solid #8d8d8d;background:linear-gradient(135deg,#d6d6d6,#fbfbfb 70%)"></div>
<div class="t" style="left:34px;top:139px;font-size:11.5px;color:#111;letter-spacing:0.35px">00005</div>
<div class="t" style="left:95px;top:139px;font-size:11.5px;color:#111;letter-spacing:0.1px">N.T.A LINH</div>
<div class="a" style="left:0;top:175px;width:213px;height:1px;background:#d8dde4"></div>
<div class="a" style="left:9px;top:158px;width:13px;height:13px;border:1px solid #8d8d8d;background:linear-gradient(135deg,#d6d6d6,#fbfbfb 70%)"></div>
<div class="t" style="left:34px;top:161px;font-size:11.5px;color:#111;letter-spacing:0.35px">00006</div>
<div class="t" style="left:95px;top:161px;font-size:11.5px;color:#111;letter-spacing:0.1px">T.T.T HUYEN</div>
<div class="a" style="left:0;top:197px;width:213px;height:1px;background:#d8dde4"></div>
<div class="a" style="left:9px;top:180px;width:13px;height:13px;border:1px solid #8d8d8d;background:linear-gradient(135deg,#d6d6d6,#fbfbfb 70%)"></div>
<div class="t" style="left:34px;top:183px;font-size:11.5px;color:#111;letter-spacing:0.35px">00007</div>
<div class="t" style="left:95px;top:183px;font-size:11.5px;color:#111;letter-spacing:0.1px">N.C HAI</div>
<div class="a" style="left:0;top:219px;width:213px;height:1px;background:#d8dde4"></div>
<div class="a" style="left:9px;top:202px;width:13px;height:13px;border:1px solid #8d8d8d;background:linear-gradient(135deg,#d6d6d6,#fbfbfb 70%)"></div>
<div class="t" style="left:34px;top:205px;font-size:11.5px;color:#111;letter-spacing:0.35px">00008</div>
<div class="t" style="left:95px;top:205px;font-size:11.5px;color:#111;letter-spacing:0.1px">N.V MINH</div>
<div class="a" style="left:0;top:241px;width:213px;height:1px;background:#d8dde4"></div>
<div class="a" style="left:9px;top:224px;width:13px;height:13px;border:1px solid #8d8d8d;background:linear-gradient(135deg,#d6d6d6,#fbfbfb 70%)"></div>
<div class="t" style="left:34px;top:227px;font-size:11.5px;color:#111;letter-spacing:0.35px">00009</div>
<div class="t" style="left:95px;top:227px;font-size:11.5px;color:#111;letter-spacing:0.1px">N.D SON</div>
<div class="a" style="left:0;top:263px;width:213px;height:1px;background:#d8dde4"></div>
<div class="a" style="left:9px;top:246px;width:13px;height:13px;border:1px solid #8d8d8d;background:linear-gradient(135deg,#d6d6d6,#fbfbfb 70%)"></div>
<div class="t" style="left:34px;top:249px;font-size:11.5px;color:#111;letter-spacing:0.35px">00010</div>
<div class="t" style="left:95px;top:249px;font-size:11.5px;color:#111;letter-spacing:0.1px">H.Q TIEN</div>
<div class="a" style="left:0;top:285px;width:213px;height:1px;background:#d8dde4"></div>
<div class="a" style="left:9px;top:268px;width:13px;height:13px;border:1px solid #8d8d8d;background:linear-gradient(135deg,#d6d6d6,#fbfbfb 70%)"></div>
<div class="t" style="left:34px;top:271px;font-size:11.5px;color:#111;letter-spacing:0.35px">00011</div>
<div class="t" style="left:95px;top:271px;font-size:11.5px;color:#111;letter-spacing:0.1px">D.X TRUONG</div>
<div class="a" style="left:0;top:307px;width:213px;height:1px;background:#d8dde4"></div>
<div class="a" style="left:9px;top:290px;width:13px;height:13px;border:1px solid #8d8d8d;background:linear-gradient(135deg,#d6d6d6,#fbfbfb 70%)"></div>
<div class="t" style="left:34px;top:293px;font-size:11.5px;color:#111;letter-spacing:0.35px">00012</div>
<div class="t" style="left:95px;top:293px;font-size:11.5px;color:#111;letter-spacing:0.1px">D.X HAI</div>
<div class="a" style="left:0;top:329px;width:213px;height:1px;background:#d8dde4"></div>
<div class="a" style="left:9px;top:312px;width:13px;height:13px;border:1px solid #8d8d8d;background:linear-gradient(135deg,#d6d6d6,#fbfbfb 70%)"></div>
<div class="t" style="left:34px;top:315px;font-size:11.5px;color:#111;letter-spacing:0.35px">00013</div>
<div class="t" style="left:95px;top:315px;font-size:11.5px;color:#111;letter-spacing:0.1px">D.T.T HUONG</div>
<div class="a" style="left:0;top:351px;width:213px;height:1px;background:#d8dde4"></div>
<div class="a" style="left:9px;top:334px;width:13px;height:13px;border:1px solid #8d8d8d;background:linear-gradient(135deg,#d6d6d6,#fbfbfb 70%)"></div>
<div class="t" style="left:34px;top:337px;font-size:11.5px;color:#111;letter-spacing:0.35px">00014</div>
<div class="t" style="left:95px;top:337px;font-size:11.5px;color:#111;letter-spacing:0.1px">N.V NAM</div>
<div class="a" style="left:0;top:373px;width:213px;height:1px;background:#d8dde4"></div>
<div class="a" style="left:9px;top:356px;width:13px;height:13px;border:1px solid #8d8d8d;background:linear-gradient(135deg,#d6d6d6,#fbfbfb 70%)"></div>
<div class="t" style="left:34px;top:359px;font-size:11.5px;color:#111;letter-spacing:0.35px">00015</div>
<div class="t" style="left:95px;top:359px;font-size:11.5px;color:#111;letter-spacing:0.1px">N.T.V TRANG</div>
<div class="a" style="left:0;top:395px;width:213px;height:1px;background:#d8dde4"></div>
<div class="a" style="left:9px;top:378px;width:13px;height:13px;border:1px solid #8d8d8d;background:linear-gradient(135deg,#d6d6d6,#fbfbfb 70%)"></div>
<div class="t" style="left:34px;top:381px;font-size:11.5px;color:#111;letter-spacing:0.35px">00016</div>
<div class="t" style="left:95px;top:381px;font-size:11.5px;color:#111;letter-spacing:0.1px">D.T.T TRANG</div>
<div class="a" style="left:0;top:417px;width:213px;height:1px;background:#d8dde4"></div>
<div class="a" style="left:9px;top:400px;width:13px;height:13px;border:1px solid #8d8d8d;background:linear-gradient(135deg,#d6d6d6,#fbfbfb 70%)"></div>
<div class="t" style="left:34px;top:403px;font-size:11.5px;color:#111;letter-spacing:0.35px">00017</div>
<div class="t" style="left:95px;top:403px;font-size:11.5px;color:#111;letter-spacing:0.1px">N.V KHUONG</div>
<div class="a" style="left:0;top:439px;width:213px;height:1px;background:#d8dde4"></div>
<div class="a" style="left:9px;top:422px;width:13px;height:13px;border:1px solid #8d8d8d;background:linear-gradient(135deg,#d6d6d6,#fbfbfb 70%)"></div>
<div class="t" style="left:34px;top:425px;font-size:11.5px;color:#111;letter-spacing:0.35px">00018</div>
<div class="t" style="left:95px;top:425px;font-size:11.5px;color:#111;letter-spacing:0.1px">D.V VY</div>
<div class="a" style="left:0;top:461px;width:213px;height:1px;background:#d8dde4"></div>
<div class="a" style="left:9px;top:444px;width:13px;height:13px;border:1px solid #8d8d8d;background:linear-gradient(135deg,#d6d6d6,#fbfbfb 70%)"></div>
<div class="t" style="left:34px;top:447px;font-size:11.5px;color:#111;letter-spacing:0.35px">00019</div>
<div class="t" style="left:95px;top:447px;font-size:11.5px;color:#111;letter-spacing:0.1px">N.T.N TU</div>
<div class="a" style="left:0;top:483px;width:213px;height:1px;background:#d8dde4"></div>
<div class="a" style="left:9px;top:466px;width:13px;height:13px;border:1px solid #8d8d8d;background:linear-gradient(135deg,#d6d6d6,#fbfbfb 70%)"></div>
<div class="t" style="left:34px;top:469px;font-size:11.5px;color:#111;letter-spacing:0.35px">00020</div>
<div class="t" style="left:95px;top:469px;font-size:11.5px;color:#111;letter-spacing:0.1px">N.H NAM</div>
<div class="a" style="left:0;top:505px;width:213px;height:1px;background:#d8dde4"></div>
<div class="a" style="left:9px;top:488px;width:13px;height:13px;border:1px solid #8d8d8d;background:linear-gradient(135deg,#d6d6d6,#fbfbfb 70%)"></div>
<div class="t" style="left:34px;top:491px;font-size:11.5px;color:#111;letter-spacing:0.35px">00021</div>
<div class="t" style="left:95px;top:491px;font-size:11.5px;color:#111;letter-spacing:0.1px">N.H THO</div>
<div class="a" style="left:0;top:527px;width:213px;height:1px;background:#d8dde4"></div>
<div class="a" style="left:9px;top:510px;width:13px;height:13px;border:1px solid #8d8d8d;background:linear-gradient(135deg,#d6d6d6,#fbfbfb 70%)"></div>
<div class="t" style="left:34px;top:513px;font-size:11.5px;color:#111;letter-spacing:0.35px">00022</div>
<div class="t" style="left:95px;top:513px;font-size:11.5px;color:#111;letter-spacing:0.1px">N.V THAI</div>
</div>
<!-- vscroll -->
<div class="a" style="left:1345px;top:146px;width:17px;height:523px;background:linear-gradient(90deg,#9db6dc,#adc3e6 60%,#9cb3d9)"></div>
<svg class="a" style="left:1348px;top:150px" width="11" height="8" viewBox="0 0 11 8"><path d="M1 6.5L5.5 1.5L10 6.5Z" fill="#4f6790"/></svg>
<div class="a" style="left:1346px;top:164px;width:15px;height:116px;border:1px solid #7e93b4;border-radius:2px;background:linear-gradient(90deg,#eef2f8,#d9e2ee 50%,#c6d3e4)"></div>
<div class="a" style="left:1349px;top:220px;width:9px;height:5px;border-top:1px solid #8a9ab4;border-bottom:1px solid #8a9ab4"></div>
<div class="a" style="left:1349px;top:222px;width:9px;height:1px;background:#8a9ab4"></div>
<svg class="a" style="left:1348px;top:656px" width="11" height="8" viewBox="0 0 11 8"><path d="M1 1.5L5.5 6.5L10 1.5Z" fill="#4f6790"/></svg>
<!-- hscroll -->
<div class="a" style="left:1132px;top:669px;width:230px;height:17px;background:linear-gradient(#a8bfe2,#9ab2d8)"></div>
<svg class="a" style="left:1137px;top:671px" width="8" height="13" viewBox="0 0 8 13"><path d="M6.5 1.5L1.5 6.5L6.5 11.5Z" fill="#4f6790"/></svg>
<div class="a" style="left:1150px;top:670px;width:129px;height:16px;border:1px solid #8599b8;border-radius:2px;background:linear-gradient(#eef2f8,#dbe3ee 45%,#c5d2e3)"></div>
<div class="a" style="left:1210px;top:674px;width:1px;height:8px;background:#8a9ab4;box-shadow:2px 0 #8a9ab4,4px 0 #8a9ab4,6px 0 #8a9ab4"></div>
<svg class="a" style="left:1333px;top:671px" width="8" height="13" viewBox="0 0 8 13"><path d="M1.5 1.5L6.5 6.5L1.5 11.5Z" fill="#4f6790"/></svg>
<div class="a" style="left:1345px;top:669px;width:17px;height:17px;background:#9cb4d9"></div>
<!-- search -->
<div class="a" style="left:1131px;top:687px;width:231px;height:23px;background:#bcd4f6"></div>
<div class="a" style="left:1134px;top:692px;width:226px;height:22px;border:1px solid #a9b9cf;background:#fff"></div>
<div class="t" style="left:1138px;top:696px;font-size:11.5px;color:#6d6d6d;letter-spacing:0.25px">Nhập tên hoặc mã nhân viên</div>

</body></html>
